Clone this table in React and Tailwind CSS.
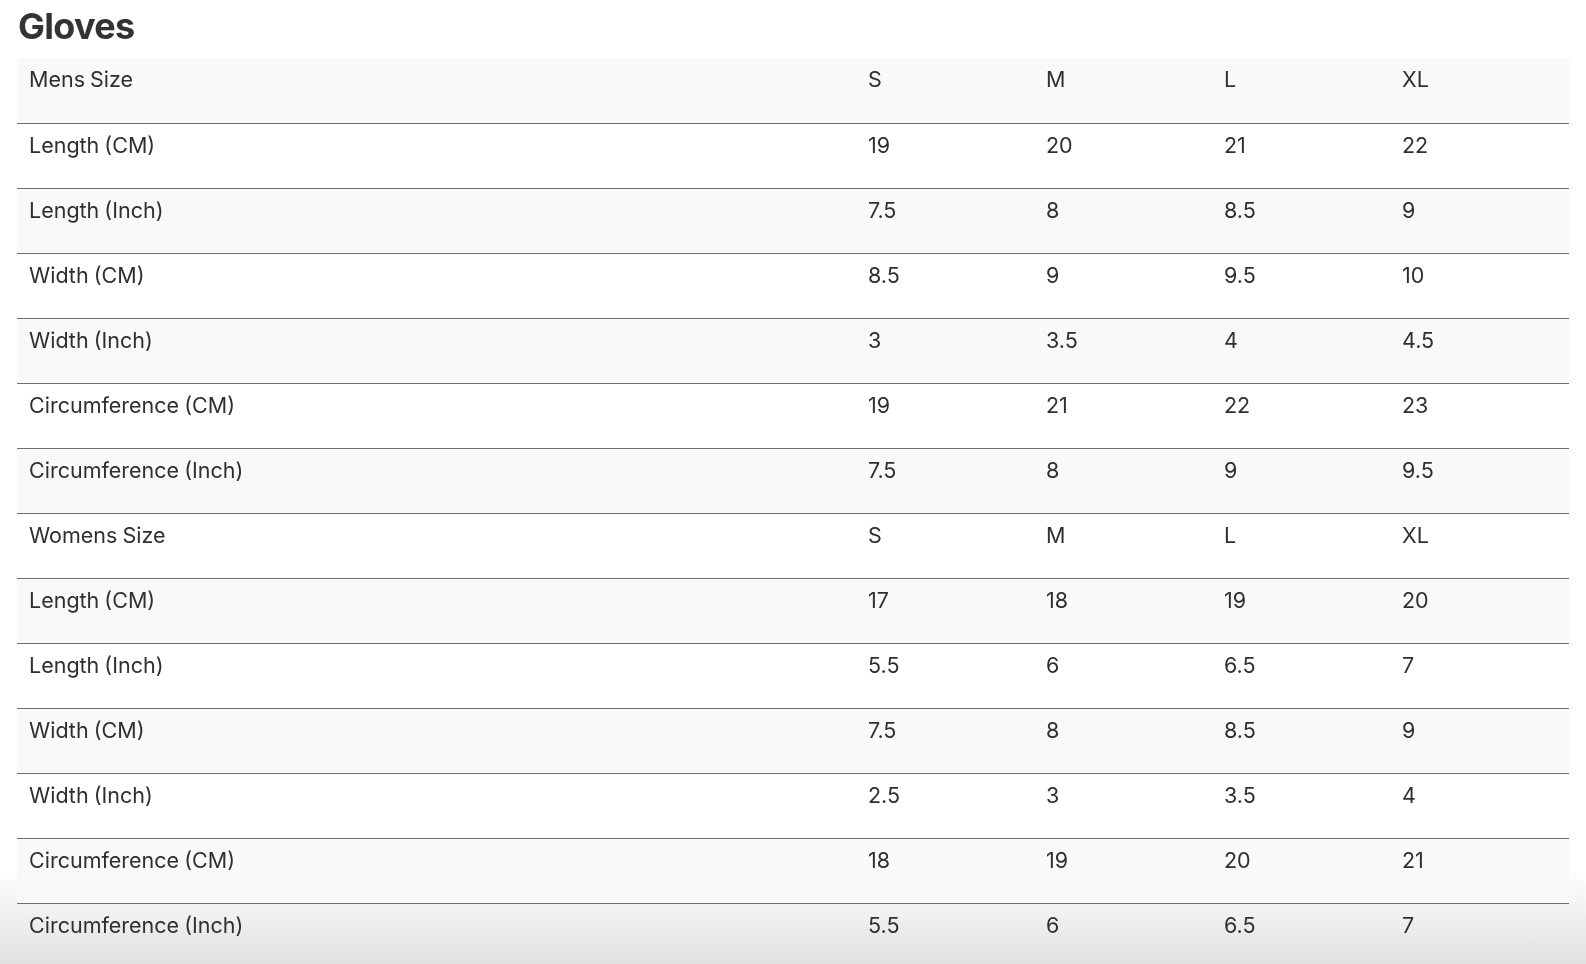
import React from 'react';

const rows = [
  ['Mens Size', 'S', 'M', 'L', 'XL'],
  ['Length (CM)', '19', '20', '21', '22'],
  ['Length (Inch)', '7.5', '8', '8.5', '9'],
  ['Width (CM)', '8.5', '9', '9.5', '10'],
  ['Width (Inch)', '3', '3.5', '4', '4.5'],
  ['Circumference (CM)', '19', '21', '22', '23'],
  ['Circumference (Inch)', '7.5', '8', '9', '9.5'],
  ['Womens Size', 'S', 'M', 'L', 'XL'],
  ['Length (CM)', '17', '18', '19', '20'],
  ['Length (Inch)', '5.5', '6', '6.5', '7'],
  ['Width (CM)', '7.5', '8', '8.5', '9'],
  ['Width (Inch)', '2.5', '3', '3.5', '4'],
  ['Circumference (CM)', '18', '19', '20', '21'],
  ['Circumference (Inch)', '5.5', '6', '6.5', '7'],
];

export default function App() {
  return (
    <div
      className="relative isolate min-h-screen px-[17px] text-[#2f2f2f]"
      style={{ fontFamily: 'Inter, "Liberation Sans", sans-serif' }}
    >
      {/* Page background with the bottom fade */}
      <div className="pointer-events-none fixed inset-0 -z-20 bg-white" />
      <div className="pointer-events-none fixed inset-x-0 bottom-0 -z-10 h-[95px] bg-gradient-to-b from-white to-[#e1e1e1]" />

      {/* Title */}
      <h2 className="pl-px text-[36px] font-bold leading-[52px] tracking-[-0.02em] text-[#333]">
        Gloves
      </h2>

      {/* Size table */}
      <table className="mt-[6px] w-[1552px] table-fixed border-collapse">
        <colgroup>
          <col className="w-[839px]" />
          <col className="w-[178px]" />
          <col className="w-[178px]" />
          <col className="w-[178px]" />
          <col />
        </colgroup>
        <tbody>
          {rows.map((row, i) => (
            <tr
              key={i}
              className={`h-[65px] border-b border-[#6f6f6f] ${
                i % 2 === 0 ? 'bg-[#f9f9f9]' : 'bg-transparent'
              }`}
            >
              {row.map((cell, j) => (
                <td
                  key={j}
                  className="px-3 pt-[5px] pb-0 align-top text-[21.5px] leading-[32px] [word-spacing:-1px]"
                >
                  {cell}
                </td>
              ))}
            </tr>
          ))}
        </tbody>
      </table>
    </div>
  );
}
